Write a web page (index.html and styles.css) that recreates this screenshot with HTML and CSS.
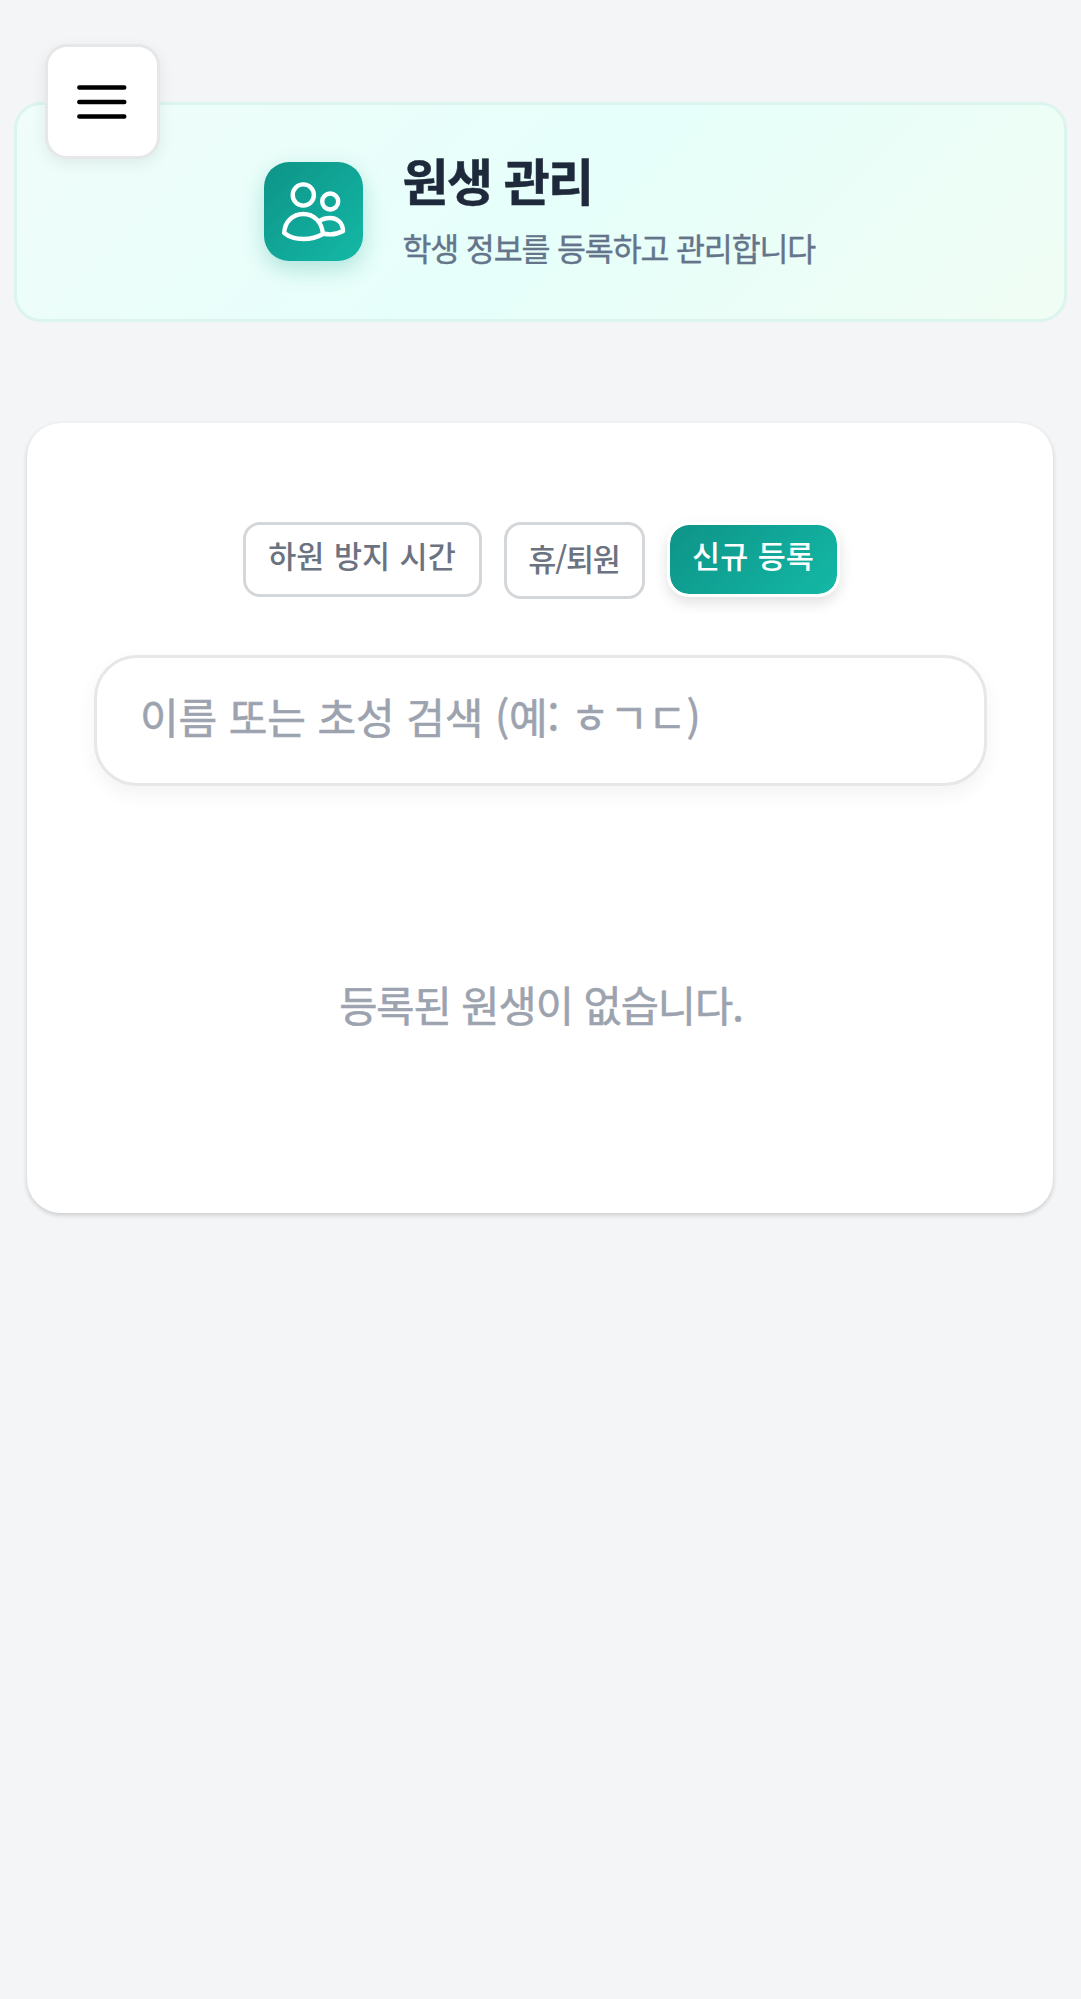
FILE: index.html
```html
<!DOCTYPE html>
<html lang="ko">
<head>
<meta charset="utf-8">
<title>원생 관리</title>
<link rel="stylesheet" href="styles.css">
</head>
<body>
<button class="menu-toggle" aria-label="메뉴">
  <svg width="50" height="34" viewBox="0 0 50 34" fill="none" stroke="#000" stroke-width="4.4" stroke-linecap="round"><path d="M2.3 2.5H47.3M2.3 17H47.3M2.3 31.5H47.3"/></svg>
</button>
<main class="page">
  <header class="banner">
    <div class="banner-icon">
      <svg width="99" height="99" viewBox="0 0 99 99" fill="none" stroke="#fff" stroke-width="4.4" stroke-linejoin="round">
        <circle cx="39.3" cy="33" r="10.6"/>
        <circle cx="66.2" cy="39.5" r="8"/>
        <path d="M20.2 71C20.6 60 28.5 52 39.3 52C50 52 58 60 58.9 72C53 75.5 46.5 77 39.3 77C32 77 25.5 75.2 20.2 71Z"/>
        <path d="M54.5 59.8C57.6 57.3 61.5 56 66 56C73.8 56 78.8 61.2 79 69C73 72.4 66 73.2 58.8 71.5"/>
      </svg>
    </div>
    <div class="banner-text">
      <h1 class="title">원생 관리</h1>
      <p class="subtitle">학생 정보를 등록하고 관리합니다</p>
    </div>
  </header>
  <section class="card">
    <div class="actions">
      <button class="btn btn-time">하원 방지 시간</button>
      <button class="btn btn-leave">휴/퇴원</button>
      <button class="btn btn-new">신규 등록</button>
    </div>
    <input class="search" type="text" placeholder="이름 또는 초성 검색 (예: ㅎㄱㄷ)">
    <p class="empty">등록된 원생이 없습니다.</p>
  </section>
</main>
</body>
</html>
```
FILE: styles.css
```css
* {
  box-sizing: border-box;
}

body {
  margin: 0;
  min-height: 1999px;
  background: #f3f5f7;
  font-family: "Noto Sans CJK KR", sans-serif;
}

button,
input {
  font-family: inherit;
  margin: 0;
}

h1,
p {
  margin: 0;
}

.menu-toggle {
  position: absolute;
  left: 44.5px;
  top: 44px;
  width: 115px;
  height: 115px;
  display: flex;
  align-items: center;
  justify-content: center;
  padding: 0;
  background: #fff;
  border: 3px solid #e5e7e9;
  border-radius: 22px;
  box-shadow: 0 5px 16px rgba(0, 0, 0, 0.07);
}

.page {
  padding: 102px 14px 0;
}

.banner {
  height: 220px;
  display: flex;
  align-items: flex-start;
  padding: 57px 0 0 247px;
  gap: 40px;
  border: 3px solid #dbf5ee;
  border-radius: 27px;
  background: linear-gradient(135deg, #f0fdfa 0%, #e6fffa 50%, #f0fdf4 100%);
}

.banner-icon {
  width: 99px;
  height: 99px;
  border-radius: 25px;
  background: linear-gradient(135deg, #0d9488, #14b8a6);
  box-shadow: 0 8px 22px rgba(13, 148, 136, 0.25);
}

.banner-icon svg {
  display: block;
}

.banner-text {
  margin: -21px 0 0 -0.5px;
}

.title {
  font-size: 50px;
  line-height: 76px;
  font-weight: 700;
  letter-spacing: -1.6px;
  color: #1e293b;
  -webkit-text-stroke: 0.5px #1e293b;
}

.subtitle {
  margin-top: 6px;
  font-size: 31.5px;
  line-height: 48px;
  letter-spacing: -1.15px;
  color: #64748b;
  -webkit-text-stroke: 0.4px #64748b;
}

.card {
  margin: 101px 14px 0 13px;
  height: 790px;
  padding: 99px 65px 0 67px;
  background: #fff;
  border-radius: 34px;
  box-shadow: 0 2px 5px rgba(0, 0, 0, 0.18);
}

.actions {
  display: flex;
  align-items: flex-start;
  justify-content: center;
  gap: 22px;
  height: 133px;
}

.btn {
  padding: 0;
  font-size: 30.5px;
  font-weight: 500;
  white-space: nowrap;
  color: #6b7280;
  background: #fff;
  border: 3px solid #d4d7da;
  border-radius: 17px;
}

.btn-time {
  width: 239px;
  height: 75px;
  padding-bottom: 9px;
  word-spacing: 1px;
}

.btn-leave {
  width: 141px;
  height: 77px;
  padding-bottom: 5px;
  letter-spacing: -1.2px;
}

.btn-new {
  width: 173px;
  height: 75px;
  padding-bottom: 9px;
  word-spacing: 1px;
  color: #fff;
  background: linear-gradient(135deg, #0d9488, #14b8a6) padding-box;
  border: 3px solid #fff;
  border-radius: 22px;
  box-shadow: 0 6px 14px rgba(0, 0, 0, 0.12);
}

.search {
  display: block;
  width: 893px;
  height: 131px;
  padding: 0 43px 10px;
  font-size: 42px;
  letter-spacing: -0.1px;
  color: #374151;
  background: #fff;
  border: 3px solid #e5e7e9;
  border-radius: 43px;
  box-shadow: 0 8px 20px rgba(0, 0, 0, 0.05);
}

.search::placeholder {
  color: #9ca3af;
  opacity: 1;
  -webkit-text-stroke: 0.6px #9ca3af;
}

.empty {
  margin-top: 187px;
  text-align: center;
  font-size: 41.5px;
  line-height: 62px;
  letter-spacing: -1px;
  color: #9ca3af;
  -webkit-text-stroke: 0.6px #9ca3af;
}
```
